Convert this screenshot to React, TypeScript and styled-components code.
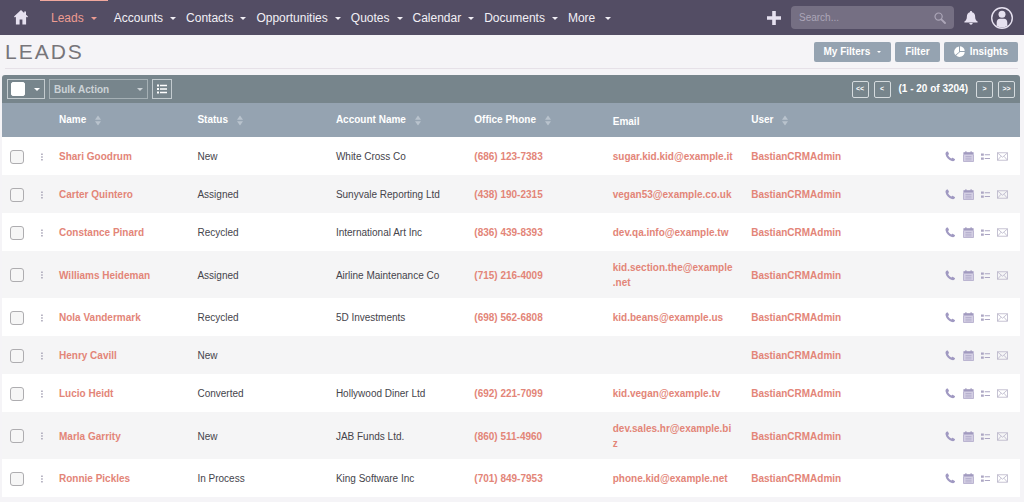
import React from "react";
import styled, { createGlobalStyle } from "styled-components";

const GlobalStyle = createGlobalStyle`
  *, *::before, *::after { box-sizing: border-box; }
  body {
    margin: 0;
    background: #f5f4f7;
    color: #45444b;
    font: 10px/15px "Liberation Sans", Arial, Helvetica, sans-serif;
  }
  a { text-decoration: none; color: inherit; }
  button, input, select { font: inherit; color: inherit; margin: 0; }
  button { cursor: pointer; }
`;

const NavBar = styled.nav`
  display: flex;
  align-items: stretch;
  height: 35px;
  background: #534d64;
  color: #f2f0f6;
`;

const HomeLink = styled.a`
  display: flex;
  align-items: center;
  width: 40px;
  padding-left: 14px;
  color: #e6e1f0;
`;

const NavItem = styled.a<{ $active?: boolean; $wide?: boolean }>`
  display: flex;
  align-items: center;
  gap: ${(p) => (p.$wide ? 10 : 7)}px;
  padding: 0 ${(p) => (p.$active ? 11 : 5)}px;
  margin-right: ${(p) => (p.$active ? 1 : 0)}px;
  border-top: 1px solid ${(p) => (p.$active ? "#f0a79d" : "transparent")};
  color: ${(p) => (p.$active ? "#ee9c91" : "inherit")};
  font-size: 12px;
`;

const Caret = styled.span<{ $small?: boolean }>`
  flex: none;
  margin-left: ${(p) => (p.$small ? 2 : 0)}px;
  border: ${(p) => (p.$small ? 2 : 3)}px solid transparent;
  border-top-color: currentColor;
  border-bottom: 0;
`;

const NavTools = styled.div`
  display: flex;
  align-items: center;
  margin-left: auto;
  padding-right: 10px;
  color: #e6e1f0;
`;

const IconButton = styled.button<{ $gap?: number }>`
  display: flex;
  padding: 0;
  margin-right: ${(p) => p.$gap ?? 0}px;
  border: 0;
  background: none;
`;

const SearchBox = styled.form`
  display: flex;
  align-items: center;
  width: 163px;
  height: 23px;
  margin-right: 10px;
  padding: 0 8px;
  border-radius: 4px;
  background: #756f83;
  color: #aca6b8;
`;

const SearchInput = styled.input`
  flex: 1;
  min-width: 0;
  padding: 0;
  border: 0;
  outline: 0;
  background: none;
  &::placeholder { color: #aca6b8; opacity: 1; }
`;

const TitleRow = styled.header`
  display: flex;
  align-items: center;
  gap: 4px;
  height: 34px;
  margin: 0 6px 0 5px;
  border-bottom: 1px solid #e6e1e8;
`;

const Title = styled.h1`
  flex: 1;
  margin: 0;
  color: #77757a;
  font-size: 21px;
  line-height: 33px;
  font-weight: 400;
  letter-spacing: 2px;
`;

const ActionButton = styled.button`
  display: flex;
  align-items: center;
  gap: 5px;
  height: 20px;
  padding: 0 10px;
  border: 0;
  border-radius: 2px;
  background: #95a3b1;
  color: #fff;
  font-weight: 700;
`;

const ListPanel = styled.main`
  margin: 6px 4px 0 2px;
  padding-bottom: 1px;
`;

const Toolbar = styled.div`
  display: flex;
  align-items: center;
  gap: 4px;
  height: 28px;
  padding: 0 5px;
  border-radius: 3px 3px 0 0;
  background: #77858c;
  color: #fff;
  font-weight: 700;
`;

const OutlineBox = styled.div<{ $width: number }>`
  display: flex;
  align-items: center;
  justify-content: space-between;
  width: ${(p) => p.$width}px;
  height: 20px;
  padding: 0 4px 0 3px;
  border: 1px solid #c3cbcf;
  color: #fff;
`;

const BulkWrap = styled(OutlineBox)`
  border-color: #a5b0b5;
  color: #cbd2d6;
`;

const BulkSelect = styled.select`
  flex: 1;
  min-width: 0;
  padding: 0 0 0 1px;
  border: 0;
  appearance: none;
  background: none;
`;

const ViewButton = styled.button`
  display: flex;
  align-items: center;
  justify-content: center;
  width: 20px;
  height: 20px;
  padding: 0;
  border: 1px solid #c3cbcf;
  background: none;
`;

const Pager = styled.div`
  display: flex;
  align-items: center;
  gap: 5px;
  margin-left: auto;
`;

const PageButton = styled.button`
  display: flex;
  align-items: center;
  justify-content: center;
  width: 17px;
  height: 17px;
  padding: 0;
  border: 1px solid #d5dbde;
  border-radius: 2px;
  background: none;
  font-size: 7px;
  line-height: 8px;
`;

const PageInfo = styled.span`
  padding: 0 3px 2px;
`;

const CheckBox = styled.input<{ $solid?: boolean }>`
  appearance: none;
  display: block;
  flex: none;
  width: 14px;
  height: 14px;
  border: 1px solid ${(p) => (p.$solid ? "#fff" : "#aeadb0")};
  border-radius: ${(p) => (p.$solid ? 2 : 3)}px;
  background: ${(p) => (p.$solid ? "#fff" : "#f6f6f6")};
`;

const Table = styled.table`
  width: 100%;
  border-collapse: collapse;
  table-layout: fixed;
`;

const Col = styled.col<{ $width?: string }>`
  width: ${(p) => p.$width ?? "auto"};
`;

const HeadRow = styled.tr`
  height: 34px;
  background: #95a3b1;
  color: #fff;
`;

const HeadCell = styled.th`
  padding: 0 8px;
  text-align: left;
  font-weight: 700;
`;

const HeadLabel = styled.span<{ $sortable?: boolean }>`
  display: flex;
  align-items: center;
  gap: 9px;
  padding: ${(p) => (p.$sortable ? "0 0 2px" : "2px 0 0")};
`;

const Row = styled.tr`
  height: 38px;
  background: #fff;
  &:nth-child(even) { background: #f5f5f6; }
`;

const Cell = styled.td`
  padding: 9px 8px 8px;
`;

const EmailCell = styled(Cell)`
  padding-right: 9px;
  word-break: break-all;
  line-break: anywhere;
`;

const RecordLink = styled.a`
  color: #e38578;
  font-weight: 700;
`;

const RowIcons = styled.div`
  display: flex;
  align-items: center;
  justify-content: flex-end;
  gap: 7px;
  margin-right: 4px;
  color: #a199c0;
`;

const SortIcon = () => (
  <svg width="6" height="14" viewBox="0 0 6 14" fill="#b9c3cd" aria-hidden="true">
    <path d="M3 3.500l3 4.200H0zM3 13.500L0 9.300h6z" />
  </svg>
);

const HomeIcon = () => (
  <svg width="14" height="15" viewBox="0 0 14 15" fill="currentColor" aria-hidden="true">
    <path d="M7 0L0 6.600l.9 1 1-.8V14.500h3.700V9.600h2.800v4.900h3.700V6.800l1 .8.9-1-2-1.900V1.500h-1.800V3z" />
  </svg>
);

const PlusIcon = () => (
  <svg width="14" height="14" viewBox="0 0 14 14" fill="currentColor" aria-hidden="true">
    <path d="M5.200 0h3.600v5.200H14v3.600H8.800V14H5.200V8.800H0V5.200h5.200z" />
  </svg>
);

const SearchIcon = () => (
  <svg width="12" height="12" viewBox="0 0 12 12" fill="none" stroke="currentColor" aria-hidden="true">
    <circle cx="4.600" cy="4.600" r="3.600" strokeWidth="1.200" />
    <path d="M7.300 7.300L11 11" strokeWidth="1.900" strokeLinecap="round" />
  </svg>
);

const BellIcon = () => (
  <svg width="14" height="14" viewBox="0 0 14 14" fill="currentColor" aria-hidden="true">
    <path d="M7 0c.7 0 1.100.5 1.100 1.200 2 .5 3 2 3 4.100 0 3 .8 4.200 2.500 5.200v.9H.4v-.9c1.700-1 2.500-2.200 2.500-5.200 0-2.100 1-3.600 3-4.100C5.900.5 6.300 0 7 0zM5.300 12.100h3.400C8.600 13.200 7.900 13.800 7 13.800s-1.600-.6-1.700-1.700z" />
  </svg>
);

const UserIcon = () => (
  <svg width="24" height="24" viewBox="0 0 24 24" aria-hidden="true">
    <circle cx="12" cy="12" r="10.300" fill="none" stroke="currentColor" strokeWidth="1.400" />
    <circle cx="12" cy="8.300" r="3.500" fill="currentColor" />
    <path d="M6.700 19.800v-3.300c0-2.300 1.300-3.700 3.300-3.700h4c2 0 3.300 1.400 3.300 3.700v3.300c-3 2.300-7.600 2.300-10.600 0z" fill="currentColor" />
  </svg>
);

const PieIcon = () => (
  <svg width="11" height="11" viewBox="0 0 11 11" fill="currentColor" aria-hidden="true">
    <path d="M5 .6V6l-3.700 3A5.200 5.200 0 0 1 5 .6z" />
    <path d="M6 .3a5.200 5.200 0 0 1 4.700 4.700H6z" />
    <path d="M6 6h4.700A5.200 5.200 0 0 1 2.100 9.600z" />
  </svg>
);

const ListIcon = () => (
  <svg width="12" height="10" viewBox="0 0 12 10" fill="currentColor" aria-hidden="true">
    <path d="M1 .5h2v2H1zM1 4h2v2H1zM1 7.500h2v2H1zM4 .7H11v1.600H4zM4 4.200H11v1.600H4zM4 7.700H11v1.600H4z" />
  </svg>
);

const KebabIcon = () => (
  <svg width="2" height="8" viewBox="0 0 2 8" fill="#a5a2b4" aria-hidden="true">
    <path d="M.2.500h1.500V2H.2zM.2 3.200h1.500v1.500H.2zM.2 6h1.500v1.500H.2z" />
  </svg>
);

const PhoneIcon = () => (
  <svg width="11" height="11" viewBox="0 0 11 11" fill="#a099c2" aria-hidden="true">
    <path d="M2 .6c.5-.3.900-.1 1.100.3l.8 1.600c.2.400.1.700-.2 1l-.7.6c.6 1.500 1.700 2.700 3.300 3.500l.8-.6c.3-.3.700-.3 1-.1l1.600 1c.4.300.5.700.2 1.100-.7 1.100-1.800 1.500-3.100 1.100C3.700 9.200 1.300 6.700.6 3.600.3 2.300.8 1.200 2 .6z" />
  </svg>
);

const CalendarIcon = () => (
  <svg width="11" height="11" viewBox="0 0 11 11" aria-hidden="true">
    <path d="M.5 1.400h10v9.100H.5z" fill="#d3cee3" />
    <path d="M.5 1.200h10v2.300H.5zM2.300.2h1.200v1.500H2.300zM7.500.2h1.200v1.500H7.500z" fill="#a19abf" />
    <path d="M.5 3.500v7h10v-7M2.500 5.500h6M2.500 7.200h6M2.500 8.900h6" fill="none" stroke="#b0a9ca" strokeWidth=".8" />
  </svg>
);

const TaskIcon = () => (
  <svg width="9" height="11" viewBox="0 0 9 11" fill="#aca6c3" aria-hidden="true">
    <path d="M0 2.500h2.800v2.300H0zM0 6.400h2.800v2.300H0zM3.800 3.200H9v1.100H3.800zM3.800 7H9v1.100H3.800z" />
  </svg>
);

const MailIcon = () => (
  <svg width="11" height="9" viewBox="0 0 11 9" fill="none" stroke="#b9b5c9" strokeWidth=".8" aria-hidden="true">
    <rect x=".5" y=".8" width="10" height="7.400" />
    <path d="M.7 1l4.800 4.200L10.300 1M.7 8l3.400-3.800M10.300 8L6.900 4.200" />
  </svg>
);

const modules = ["Leads", "Accounts", "Contacts", "Opportunities", "Quotes", "Calendar", "Documents", "More"];

const columns = [
  { label: "Name", sortable: true },
  { label: "Status", sortable: true },
  { label: "Account Name", sortable: true },
  { label: "Office Phone", sortable: true },
  { label: "Email", sortable: false },
  { label: "User", sortable: true },
];

const leads = [
  ["Shari Goodrum", "New", "White Cross Co", "(686) 123-7383", "sugar.kid.kid@example.it"],
  ["Carter Quintero", "Assigned", "Sunyvale Reporting Ltd", "(438) 190-2315", "vegan53@example.co.uk"],
  ["Constance Pinard", "Recycled", "International Art Inc", "(836) 439-8393", "dev.qa.info@example.tw"],
  ["Williams Heideman", "Assigned", "Airline Maintenance Co", "(715) 216-4009", "kid.section.the@example.net"],
  ["Nola Vandermark", "Recycled", "5D Investments", "(698) 562-6808", "kid.beans@example.us"],
  ["Henry Cavill", "New", "", "", ""],
  ["Lucio Heidt", "Converted", "Hollywood Diner Ltd", "(692) 221-7099", "kid.vegan@example.tv"],
  ["Marla Garrity", "New", "JAB Funds Ltd.", "(860) 511-4960", "dev.sales.hr@example.biz"],
  ["Ronnie Pickles", "In Process", "King Software Inc", "(701) 849-7953", "phone.kid@example.net"],
];

export default function App() {
  return (
    <>
      <GlobalStyle />
      <NavBar aria-label="Modules">
        <HomeLink href="#home" aria-label="Home"><HomeIcon /></HomeLink>
        {modules.map((name) => (
          <NavItem key={name} href={`#${name.toLowerCase()}`} $active={name === "Leads"} $wide={name === "More"}>
            {name}
            <Caret />
          </NavItem>
        ))}
        <NavTools>
          <IconButton aria-label="Create" $gap={10}><PlusIcon /></IconButton>
          <SearchBox role="search">
            <SearchInput type="text" placeholder="Search..." aria-label="Search" />
            <IconButton type="button" aria-label="Run search"><SearchIcon /></IconButton>
          </SearchBox>
          <IconButton aria-label="Notifications" $gap={12}><BellIcon /></IconButton>
          <IconButton aria-label="Profile"><UserIcon /></IconButton>
        </NavTools>
      </NavBar>

      <TitleRow>
        <Title>LEADS</Title>
        <ActionButton>My Filters <Caret $small /></ActionButton>
        <ActionButton>Filter</ActionButton>
        <ActionButton><PieIcon /> Insights</ActionButton>
      </TitleRow>

      <ListPanel>
        <Toolbar>
          <OutlineBox $width={38}>
            <CheckBox type="checkbox" aria-label="Select all" $solid />
            <Caret />
          </OutlineBox>
          <BulkWrap $width={99}>
            <BulkSelect aria-label="Bulk Action" defaultValue="bulk">
              <option value="bulk">Bulk Action</option>
            </BulkSelect>
            <Caret />
          </BulkWrap>
          <ViewButton aria-label="Choose columns"><ListIcon /></ViewButton>
          <Pager>
            <PageButton aria-label="First page">&lt;&lt;</PageButton>
            <PageButton aria-label="Previous page">&lt;</PageButton>
            <PageInfo>(1 - 20 of 3204)</PageInfo>
            <PageButton aria-label="Next page">&gt;</PageButton>
            <PageButton aria-label="Last page">&gt;&gt;</PageButton>
          </Pager>
        </Toolbar>
        <Table>
          <colgroup>
            <Col $width="31px" />
            <Col $width="18px" />
            {columns.map((c) => <Col key={c.label} $width="13.6%" />)}
            <Col />
          </colgroup>
          <thead>
            <HeadRow>
              <td />
              <td />
              {columns.map((c) => (
                <HeadCell key={c.label} scope="col">
                  <HeadLabel $sortable={c.sortable}>
                    {c.label}
                    {c.sortable && <SortIcon />}
                  </HeadLabel>
                </HeadCell>
              ))}
              <td />
            </HeadRow>
          </thead>
          <tbody>
            {leads.map(([name, status, account, phone, email]) => (
              <Row key={name}>
                <Cell><CheckBox type="checkbox" aria-label={`Select ${name}`} /></Cell>
                <Cell><IconButton aria-label={`Actions for ${name}`}><KebabIcon /></IconButton></Cell>
                <Cell><RecordLink href="#lead">{name}</RecordLink></Cell>
                <Cell>{status}</Cell>
                <Cell>{account}</Cell>
                <Cell>{phone && <RecordLink href={`tel:${phone}`}>{phone}</RecordLink>}</Cell>
                <EmailCell>{email && <RecordLink href={`mailto:${email}`}>{email}</RecordLink>}</EmailCell>
                <Cell><RecordLink href="#user">BastianCRMAdmin</RecordLink></Cell>
                <Cell>
                  <RowIcons>
                    <IconButton aria-label="Log call"><PhoneIcon /></IconButton>
                    <IconButton aria-label="Schedule meeting"><CalendarIcon /></IconButton>
                    <IconButton aria-label="Create task"><TaskIcon /></IconButton>
                    <IconButton aria-label="Compose email"><MailIcon /></IconButton>
                  </RowIcons>
                </Cell>
              </Row>
            ))}
          </tbody>
        </Table>
      </ListPanel>
    </>
  );
}
